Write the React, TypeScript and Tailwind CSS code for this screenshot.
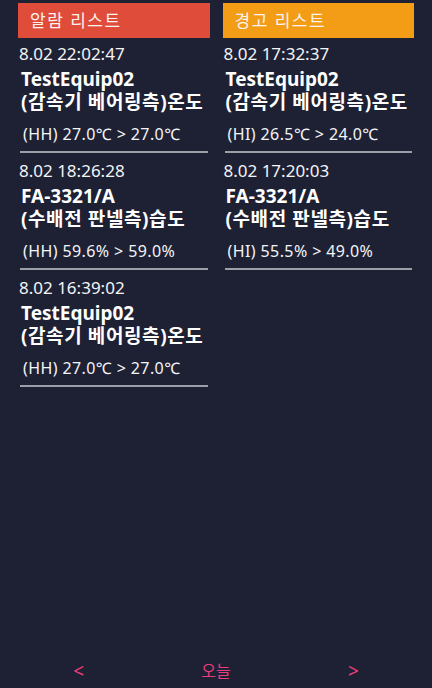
import React from 'react';

interface AlarmItem {
  time: string;
  equip: string;
  point: string;
  value: string;
}

const alarms: AlarmItem[] = [
  { time: '8.02 22:02:47', equip: 'TestEquip02', point: '(감속기 베어링측)온도', value: '(HH) 27.0℃ > 27.0℃' },
  { time: '8.02 18:26:28', equip: 'FA-3321/A', point: '(수배전 판넬측)습도', value: '(HH) 59.6% > 59.0%' },
  { time: '8.02 16:39:02', equip: 'TestEquip02', point: '(감속기 베어링측)온도', value: '(HH) 27.0℃ > 27.0℃' },
];

const warnings: AlarmItem[] = [
  { time: '8.02 17:32:37', equip: 'TestEquip02', point: '(감속기 베어링측)온도', value: '(HI) 26.5℃ > 24.0℃' },
  { time: '8.02 17:20:03', equip: 'FA-3321/A', point: '(수배전 판넬측)습도', value: '(HI) 55.5% > 49.0%' },
];

function Row({ item }: { item: AlarmItem }) {
  return (
    <div className="pt-[4px] pb-[2px]">
      <div className="h-[24px] pl-[1px] text-[17px] leading-[24px] text-[#f4f4f6] whitespace-nowrap">{item.time}</div>
      <div className="mt-[2px] h-[23px] pl-[3px] text-[19px] leading-[23px] font-bold text-white whitespace-nowrap">{item.equip}</div>
      <div className="h-[23px] pl-[3px] text-[19px] leading-[23px] font-bold tracking-[0.6px] text-white whitespace-nowrap">
        {item.point}
      </div>
      <div className="mt-[8px] h-[24px] pl-[5px] text-[16px] leading-[24px] tracking-[0.4px] text-[#f4f4f6] whitespace-nowrap">
        {item.value}
      </div>
      <div className="mt-[5px] mx-[2px] h-[2px] bg-[#9c9ea8]" />
    </div>
  );
}

function Column({ title, color, items }: { title: string; color: string; items: AlarmItem[] }) {
  return (
    <div className="flex flex-col min-w-0">
      <div className={`h-[35px] flex items-center pl-[12px] text-[17px] tracking-[1.5px] text-[#fbf3ef] ${color}`}>
        {title}
      </div>
      {items.map((it, i) => (
        <Row key={i} item={it} />
      ))}
    </div>
  );
}

export default function App() {
  return (
    <div
      className="w-[432px] h-[688px] bg-[#1e2134] flex flex-col overflow-hidden"
      style={{ fontFamily: '"Noto Sans", "Noto Sans CJK KR", sans-serif' }}
    >
      <div className="flex-1 grid grid-cols-2 gap-[13px] px-[18px] pt-[3px] items-start">
        <Column title="알람 리스트" color="bg-[#e04c3a]" items={alarms} />
        <Column title="경고 리스트" color="bg-[#f39c15]" items={warnings} />
      </div>

      {/* 하단 날짜 이동 */}
      <div className="h-[34px] grid grid-cols-3 px-[10px] items-center text-[16px] leading-[34px] text-[#ea3c7c]">
        <span className="text-center text-[19px]">&lt;</span>
        <span className="text-center">오늘</span>
        <span className="text-center text-[19px]">&gt;</span>
      </div>
    </div>
  );
}
